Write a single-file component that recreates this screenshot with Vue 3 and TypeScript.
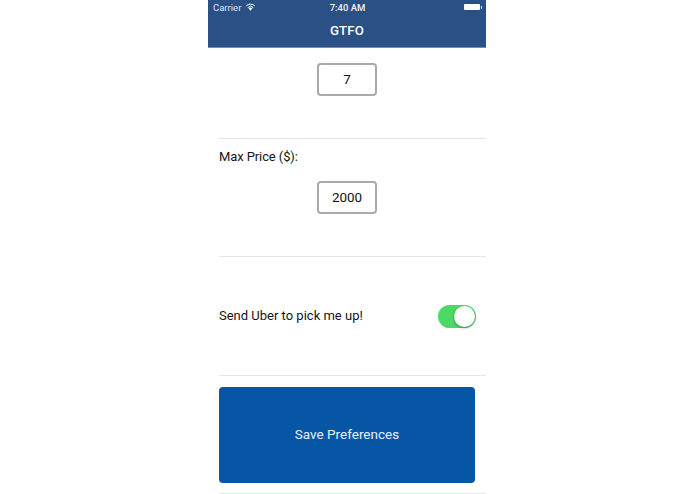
<script setup lang="ts">
const title = 'GTFO'
</script>

<template>
  <div class="page">
    <main class="phone">
      <header class="nav">
        <div class="status">
          <div class="status-left">
            <span>Carrier</span>
            <svg class="wifi" width="11" height="8" viewBox="0 0 12 9">
              <path d="M6 8.6 3.9 6.2a3 3 0 0 1 4.2 0Z" fill="#fff" />
              <path d="M2.9 5.1a4.5 4.5 0 0 1 6.2 0" fill="none" stroke="#fff" stroke-width="1.1" />
              <path d="M1.2 3.2a7 7 0 0 1 9.6 0" fill="none" stroke="#fff" stroke-width="1.1" />
            </svg>
          </div>
          <span class="clock">7:40 AM</span>
          <div class="battery"><i class="cell"></i><i class="nub"></i></div>
        </div>
        <div class="title">{{ title }}</div>
      </header>

      <section class="row first">
        <div class="box">7</div>
      </section>

      <section class="row price">
        <label class="label">Max Price ($):</label>
        <div class="box">2000</div>
      </section>

      <section class="row uber">
        <span class="label">Send Uber to pick me up!</span>
        <span class="switch"><i class="knob"></i></span>
      </section>

      <section class="row action">
        <button class="save" type="button">Save Preferences</button>
      </section>
    </main>
  </div>
</template>

<style>
html, body { margin: 0; background: #fff; }
</style>

<style scoped>
.page {
  width: 695px;
  height: 494px;
  overflow: hidden;
  display: flex;
  justify-content: center;
  background: #fff;
  font-family: Roboto, "Liberation Sans", sans-serif;
}
.phone {
  width: 278px;
  margin-left: -1px;
  display: flex;
  flex-direction: column;
  color: #111;
}
.nav {
  height: 47px;
  flex: none;
  background: #2b5085;
  border-bottom: 1px solid #6f8db8;
  color: #fff;
}
.status {
  height: 14px;
  padding: 0 4px 0 5px;
  display: grid;
  grid-template-columns: 1fr auto 1fr;
  align-items: center;
  font-size: 9.5px;
  color: #dfe6f0;
}
.status-left { display: flex; align-items: center; gap: 4px; }
.clock { font-size: 9.5px; font-weight: 500; color: #f1f4f9; }
.battery { justify-self: end; display: flex; align-items: center; }
.cell { width: 16px; height: 6px; background: #fff; border-radius: 1px; }
.nub { width: 1px; height: 3px; margin-left: 1px; background: #e6ecf5; }
.title {
  height: 33px;
  display: flex;
  align-items: center;
  justify-content: center;
  font-size: 13.2px;
  font-weight: 500;
  letter-spacing: 0.2px;
}
.row {
  margin-left: 11px;
  box-sizing: border-box;
  border-bottom: 1px solid #e6e6e6;
  flex: none;
}
.first {
  height: 91px;
  padding-top: 15px;
}
.price {
  height: 118px;
  padding-top: 9px;
}
.price .label { display: block; margin-bottom: 16px; height: 17px; line-height: 17px; letter-spacing: -0.1px; }
.box {
  width: 60px;
  height: 33px;
  box-sizing: border-box;
  margin-left: 98px;
  padding-bottom: 1px;
  display: flex;
  align-items: center;
  justify-content: center;
  border: 2px solid #a9a9a9;
  border-radius: 4px;
  font-size: 13.4px;
  color: #111;
}
.label { font-size: 13px; color: #161616; }
.uber {
  height: 119px;
  padding: 0 10px 0 0;
  display: flex;
  align-items: center;
  justify-content: space-between;
}
.uber .label { padding-bottom: 1px; }
.switch {
  width: 38px;
  height: 23px;
  box-sizing: border-box;
  padding: 1px;
  display: flex;
  justify-content: flex-end;
  border-radius: 12px;
  background: #4cd964;
}
.knob {
  width: 21px;
  height: 21px;
  border-radius: 50%;
  background: #fff;
  box-shadow: 0 1px 3px rgba(0, 0, 0, 0.35);
}
.action {
  height: 118px;
  padding: 11px 11px 0 0;
}
.save {
  display: block;
  width: 100%;
  height: 96px;
  padding: 0 0 2px;
  border: 0;
  border-radius: 4px;
  background: #0756a6;
  color: #e8f0f8;
  font-family: inherit;
  font-size: 13.5px;
}
</style>
